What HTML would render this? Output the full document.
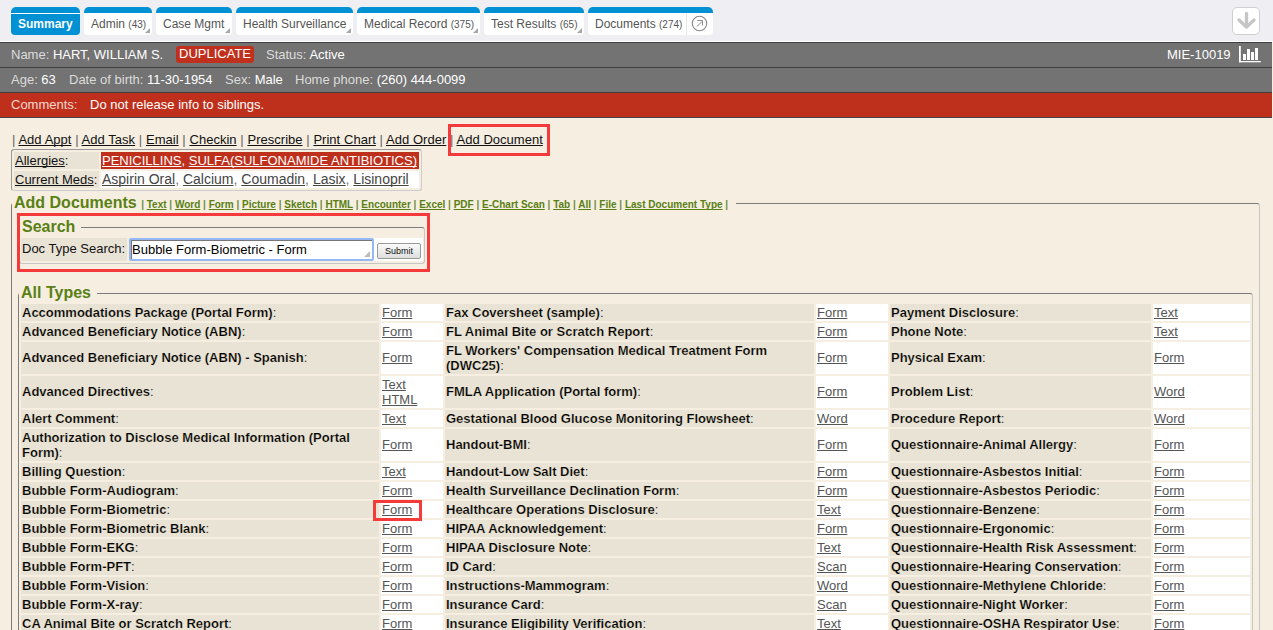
<!DOCTYPE html>
<html><head><meta charset="utf-8">
<style>
*{box-sizing:border-box}
html,body{margin:0;padding:0;overflow:hidden}
body{width:1273px;height:630px;position:relative;background:#f5eee1;font-family:"Liberation Sans",sans-serif;color:#222}
a{text-decoration:underline;text-decoration-skip-ink:none}
#top{position:absolute;left:0;top:0;width:1273px;height:42px;background:#efeef3;border-bottom:1px solid #fff}
.tab{position:absolute;top:7px;height:28px;background:#fff;border-top:6px solid #0091d5;border-radius:5px 5px 4px 4px;font-size:12px;color:#555;white-space:nowrap}
.tab span{position:absolute;left:7px;top:4px}
.tab small{font-size:10px}
.tab i{position:absolute;right:2px;bottom:2px;width:0;height:0;border-left:5px solid transparent;border-bottom:5px solid #a8a8a8}
.tab.sel{background:#0091d5;color:#fff;font-weight:bold}
.tab.sel:before{content:"";position:absolute;left:0;right:0;top:0;height:1px;background:#fff}
#dl{position:absolute;left:1232px;top:7px;width:28px;height:28px;background:#fff;border:1px solid #cfcfcf;border-radius:5px}
.bar{position:absolute;left:0;width:1272px;height:25px;border-top:1px solid #3f3f3f;font-size:13px;color:#dcdcdc;white-space:nowrap}
.bar b{font-weight:normal;color:#fff}
.bar .t{position:absolute;top:4px}
#b1{top:42px;background:#737373}
#b2{top:67px;background:#737373}
#b3{top:92px;background:#bf301c;color:#f4d8d0}
#b4{position:absolute;left:0;top:117px;width:1272px;height:1px;background:#444}
#dup{position:absolute;left:176px;top:3px;width:78px;height:17px;background:#c0311d;border-radius:3px;color:#fff}
#acts{position:absolute;left:12px;top:132px;font-size:13px;letter-spacing:0.02px;word-spacing:0.1px;color:#666;white-space:nowrap}
#acts a{color:#111}
.rb{position:absolute;border:3px solid #f43a3a}
#alg{position:absolute;left:11px;top:149px;width:411px;height:42px;border:1px solid #999;border-right-color:#ccc;border-bottom-color:#ccc;border-radius:3px}
#alg table{border-spacing:2px;border-collapse:separate;position:absolute;left:0;top:0}
#alg td{padding:0 1px;height:17px;font-size:13px;line-height:15px;white-space:nowrap}
#alg td.lb{background:#e9e3d6;width:85px;color:#111}
#alg td.lb a{color:#111}
#alg td.al{background:#bf301c;color:#fff;width:318px}
#alg td.md{background:#fff;font-size:14px;color:#777}
#alg td.md a{color:#444}
.fs{position:absolute;border:1px solid #c6c6c6;border-top-color:#7b7b7b;border-left-color:#7b7b7b;border-radius:3px}
.lg{position:absolute;background:#f5eee1;color:#5a8014;font-weight:bold;font-size:16px;white-space:nowrap;padding:0 6px 0 2px}
.lg small{font-size:10px;color:#6f8f3a}
.lg small a{color:#5a8014}
#grid{position:absolute;left:19px;top:302px;border-spacing:2px;border-collapse:separate;table-layout:fixed;width:1233px}
#grid td{padding:1px;font-size:13px;line-height:15px;vertical-align:middle;color:#333}
#grid td b{color:#000;-webkit-text-stroke:0.2px #e9e3d6}
#grid td.l{background:#e9e3d6}
#grid td.k{background:#fff}
#grid td.k a{color:#555}
#grid td.m{vertical-align:top;padding-top:8px}
</style></head><body>
<div id="top">
 <div class="tab sel" style="left:11px;width:69px"><span style="left:7px">Summary</span></div>
 <div class="tab" style="left:84px;width:68px"><span>Admin <small>(43)</small></span><i></i></div>
 <div class="tab" style="left:156px;width:76px"><span>Case Mgmt</span><i></i></div>
 <div class="tab" style="left:236px;width:117px"><span>Health Surveillance</span><i></i></div>
 <div class="tab" style="left:357px;width:123px"><span>Medical Record <small>(375)</small></span><i></i></div>
 <div class="tab" style="left:484px;width:100px"><span>Test Results <small>(65)</small></span><i></i></div>
 <div class="tab" style="left:588px;width:125px"><span>Documents <small>(274)</small></span>
   <div style="position:absolute;left:98px;top:1px;width:1px;height:21px;background:#e6e6e6"></div>
   <svg style="position:absolute;left:103px;top:1px" width="18" height="18" viewBox="0 0 18 18"><circle cx="8.5" cy="9.5" r="7.2" fill="none" stroke="#888" stroke-width="1.1"/><path d="M6 12.5 L11 7.5 M6.5 6.5 H11.5 V11.5" fill="none" stroke="#888" stroke-width="1"/></svg>
 </div>
 <div id="dl"><svg width="26" height="26" viewBox="0 0 26 26" style="position:absolute;left:0;top:0"><path d="M13.5 5.5 V18" stroke="#c6c6c6" stroke-width="3.4" stroke-linecap="round" fill="none"/><path d="M6 12 L13.5 19 L21 12" stroke="#c6c6c6" stroke-width="3.4" stroke-linecap="round" stroke-linejoin="round" fill="none"/></svg></div>
</div>
<div class="bar" id="b1">
 <span class="t" style="left:11px">Name: <b>HART, WILLIAM S.</b></span>
 <div id="dup"><span style="position:absolute;left:3px;top:0px">DUPLICATE</span></div>
 <span class="t" style="left:266px">Status: <b>Active</b></span>
 <span class="t" style="left:1167px"><b>MIE-10019</b></span>
 <svg style="position:absolute;left:1239px;top:2px" width="22" height="18" viewBox="0 0 22 18"><rect x="0" y="1" width="1.8" height="16.3" fill="#fff"/><rect x="0" y="16" width="21.8" height="1.3" fill="#fff"/><rect x="4" y="9" width="3" height="6" fill="#fff"/><rect x="8" y="4" width="3" height="11" fill="#fff"/><rect x="12" y="7" width="3" height="8" fill="#fff"/><rect x="16" y="3" width="3" height="12" fill="#fff"/></svg>
</div>
<div class="bar" id="b2">
 <span class="t" style="left:11px">Age: <b>63</b></span>
 <span class="t" style="left:69px">Date of birth: <b>11-30-1954</b></span>
 <span class="t" style="left:225px">Sex: <b>Male</b></span>
 <span class="t" style="left:295px">Home phone: <b>(260) 444-0099</b></span>
</div>
<div class="bar" id="b3">
 <span class="t" style="left:11px">Comments:</span>
 <span class="t" style="left:90px"><b>Do not release info to siblings.</b></span>
</div>
<div id="b4"></div>

<div id="acts">| <a>Add Appt</a> | <a>Add Task</a> | <a>Email</a> | <a>Checkin</a> | <a>Prescribe</a> | <a>Print Chart</a> | <a>Add Order</a> | <a>Add Document</a></div>
<div class="rb" style="left:448px;top:124px;width:102px;height:32px"></div>

<div id="alg"><table>
<tr><td class="lb"><a>Allergies</a>:</td><td class="al"><a>PENICILLINS</a>, <a>SULFA(SULFONAMIDE ANTIBIOTICS)</a></td></tr>
<tr><td class="lb"><a>Current Meds</a>:</td><td class="md"><a>Aspirin Oral</a>, <a>Calcium</a>, <a>Coumadin</a>, <a>Lasix</a>, <a>Lisinopril</a></td></tr>
</table></div>

<div class="fs" style="left:11px;top:203px;width:1249px;height:440px"></div>
<div class="lg" style="left:12px;top:194px;padding-right:8px">Add Documents <small>| <a>Text</a> | <a>Word</a> | <a>Form</a> | <a>Picture</a> | <a>Sketch</a> | <a>HTML</a> | <a>Encounter</a> | <a>Excel</a> | <a>PDF</a> | <a>E-Chart Scan</a> | <a>Tab</a> | <a>All</a> | <a>File</a> | <a>Last Document Type</a> |</small></div>

<div class="fs" style="left:19px;top:227px;width:406px;height:37px"></div>
<div class="lg" style="left:20px;top:218px">Search</div>
<div style="position:absolute;left:21px;top:238px;width:106px;height:23px;background:#e9e3d6;font-size:13px;color:#111;padding:3px 0 0 1px;white-space:nowrap">Doc Type Search:</div>
<div style="position:absolute;left:130px;top:238px;width:293px;height:23px;background:#fff"></div>
<div style="position:absolute;left:129px;top:238px;width:245px;height:23px;border:2px solid #93b8f4;border-radius:2px;background:#fff"><div style="position:absolute;left:0;top:0;right:0;bottom:0;border-top:1px solid #777;border-left:1px solid #777"></div><span style="position:absolute;left:1px;top:2px;font-size:13px;color:#000;white-space:nowrap">Bubble Form-Biometric - Form</span><i style="position:absolute;right:2px;bottom:2px;border-left:6px solid transparent;border-bottom:6px solid #bbb"></i></div>
<div style="position:absolute;left:377px;top:243px;width:44px;height:16px;border:1px solid #999;border-radius:2px;background:linear-gradient(#fafafa,#dedede);font-size:9px;color:#111;text-align:center;line-height:14px">Submit</div>
<div class="rb" style="left:17px;top:213px;width:413px;height:59px"></div>

<div class="fs" style="left:18px;top:293px;width:1235px;height:400px"></div>
<div class="lg" style="left:19px;top:284px">All Types</div>
<table id="grid">
<colgroup><col style="width:358px"><col style="width:62px"><col style="width:369px"><col style="width:72px"><col style="width:261px"><col style="width:97px"></colgroup>
<tr><td class="l"><b>Accommodations Package (Portal Form)</b>:</td><td class="k"><a>Form</a></td><td class="l"><b>Fax Coversheet (sample)</b>:</td><td class="k"><a>Form</a></td><td class="l"><b>Payment Disclosure</b>:</td><td class="k"><a>Text</a></td></tr>
<tr><td class="l"><b>Advanced Beneficiary Notice (ABN)</b>:</td><td class="k"><a>Form</a></td><td class="l"><b>FL Animal Bite or Scratch Report</b>:</td><td class="k"><a>Form</a></td><td class="l"><b>Phone Note</b>:</td><td class="k"><a>Text</a></td></tr>
<tr><td class="l m"><b>Advanced Beneficiary Notice (ABN) - Spanish</b>:</td><td class="k m"><a>Form</a></td><td class="l"><b>FL Workers&#39; Compensation Medical Treatment Form (DWC25)</b>:</td><td class="k m"><a>Form</a></td><td class="l m"><b>Physical Exam</b>:</td><td class="k m"><a>Form</a></td></tr>
<tr><td class="l m"><b>Advanced Directives</b>:</td><td class="k"><a>Text</a><br><a>HTML</a></td><td class="l m"><b>FMLA Application (Portal form)</b>:</td><td class="k m"><a>Form</a></td><td class="l m"><b>Problem List</b>:</td><td class="k m"><a>Word</a></td></tr>
<tr><td class="l"><b>Alert Comment</b>:</td><td class="k"><a>Text</a></td><td class="l"><b>Gestational Blood Glucose Monitoring Flowsheet</b>:</td><td class="k"><a>Word</a></td><td class="l"><b>Procedure Report</b>:</td><td class="k"><a>Word</a></td></tr>
<tr><td class="l"><b>Authorization to Disclose Medical Information (Portal Form)</b>:</td><td class="k m"><a>Form</a></td><td class="l m"><b>Handout-BMI</b>:</td><td class="k m"><a>Form</a></td><td class="l m"><b>Questionnaire-Animal Allergy</b>:</td><td class="k m"><a>Form</a></td></tr>
<tr><td class="l"><b>Billing Question</b>:</td><td class="k"><a>Text</a></td><td class="l"><b>Handout-Low Salt Diet</b>:</td><td class="k"><a>Form</a></td><td class="l"><b>Questionnaire-Asbestos Initial</b>:</td><td class="k"><a>Form</a></td></tr>
<tr><td class="l"><b>Bubble Form-Audiogram</b>:</td><td class="k"><a>Form</a></td><td class="l"><b>Health Surveillance Declination Form</b>:</td><td class="k"><a>Form</a></td><td class="l"><b>Questionnaire-Asbestos Periodic</b>:</td><td class="k"><a>Form</a></td></tr>
<tr><td class="l"><b>Bubble Form-Biometric</b>:</td><td class="k"><a>Form</a></td><td class="l"><b>Healthcare Operations Disclosure</b>:</td><td class="k"><a>Text</a></td><td class="l"><b>Questionnaire-Benzene</b>:</td><td class="k"><a>Form</a></td></tr>
<tr><td class="l"><b>Bubble Form-Biometric Blank</b>:</td><td class="k"><a>Form</a></td><td class="l"><b>HIPAA Acknowledgement</b>:</td><td class="k"><a>Form</a></td><td class="l"><b>Questionnaire-Ergonomic</b>:</td><td class="k"><a>Form</a></td></tr>
<tr><td class="l"><b>Bubble Form-EKG</b>:</td><td class="k"><a>Form</a></td><td class="l"><b>HIPAA Disclosure Note</b>:</td><td class="k"><a>Text</a></td><td class="l"><b>Questionnaire-Health Risk Assessment</b>:</td><td class="k"><a>Form</a></td></tr>
<tr><td class="l"><b>Bubble Form-PFT</b>:</td><td class="k"><a>Form</a></td><td class="l"><b>ID Card</b>:</td><td class="k"><a>Scan</a></td><td class="l"><b>Questionnaire-Hearing Conservation</b>:</td><td class="k"><a>Form</a></td></tr>
<tr><td class="l"><b>Bubble Form-Vision</b>:</td><td class="k"><a>Form</a></td><td class="l"><b>Instructions-Mammogram</b>:</td><td class="k"><a>Word</a></td><td class="l"><b>Questionnaire-Methylene Chloride</b>:</td><td class="k"><a>Form</a></td></tr>
<tr><td class="l"><b>Bubble Form-X-ray</b>:</td><td class="k"><a>Form</a></td><td class="l"><b>Insurance Card</b>:</td><td class="k"><a>Scan</a></td><td class="l"><b>Questionnaire-Night Worker</b>:</td><td class="k"><a>Form</a></td></tr>
<tr><td class="l"><b>CA Animal Bite or Scratch Report</b>:</td><td class="k"><a>Form</a></td><td class="l"><b>Insurance Eligibility Verification</b>:</td><td class="k"><a>Text</a></td><td class="l"><b>Questionnaire-OSHA Respirator Use</b>:</td><td class="k"><a>Form</a></td></tr></table>
<div class="rb" style="left:373px;top:500px;width:49px;height:21px"></div>
</body></html>
